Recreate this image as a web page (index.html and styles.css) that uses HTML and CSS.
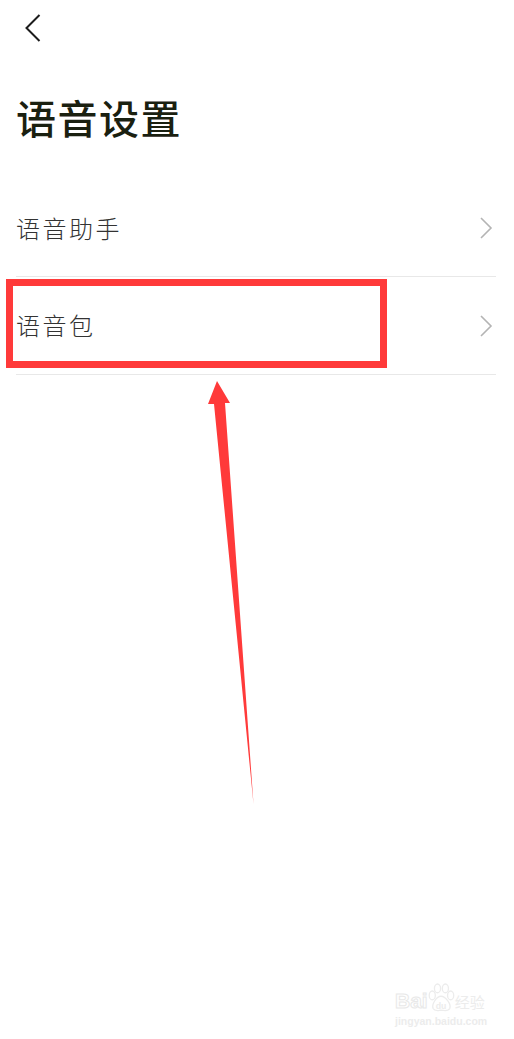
FILE: index.html
```html
<!DOCTYPE html>
<html lang="zh">
<head>
  <title>语音设置</title>
  <link rel="stylesheet" href="styles.css">
</head>
<body>
  <div class="back">
    <svg width="20" height="30" viewBox="0 0 20 30"><path d="M15.5 2 L2.5 15 L15.5 28" fill="none" stroke="#1c1c1c" stroke-width="2"/></svg>
  </div>

  <h1 class="title">语音设置</h1>

  <div class="list">
    <div class="row">
      <span class="row-text">语音助手</span>
      <svg class="chev" width="14" height="24" viewBox="0 0 14 24"><path d="M2 2 L12 12 L2 22" fill="none" stroke="#b4b4b4" stroke-width="1.6"/></svg>
    </div>
    <div class="row">
      <span class="row-text">语音包</span>
      <svg class="chev" width="14" height="24" viewBox="0 0 14 24"><path d="M2 2 L12 12 L2 22" fill="none" stroke="#b4b4b4" stroke-width="1.6"/></svg>
    </div>
  </div>

  <!-- annotation drawn over the screenshot -->
  <div class="mark-box"></div>
  <svg class="mark-arrow" width="70" height="430" viewBox="0 0 70 430">
    <path d="M27 1 L40 23 L35 23 L63.5 424 L24 24 L18 24 Z" fill="#ff3a3a"/>
  </svg>

  <div class="watermark">
    <div class="wm-top">
      <span class="wm-bai">Bai</span>
      <svg class="wm-paw" width="28" height="30" viewBox="0 0 32 34">
        <g fill="none" stroke="#ececec" stroke-width="1.5">
          <ellipse cx="6" cy="14" rx="3.5" ry="5"/>
          <ellipse cx="12" cy="6" rx="3.5" ry="5"/>
          <ellipse cx="21" cy="6" rx="3.5" ry="5"/>
          <ellipse cx="27" cy="14" rx="3.5" ry="5"/>
          <path d="M16 15 C11 15 5 24 7 29 C9 33 14 31 16 31 C19 31 24 33 26 29 C28 24 21 15 16 15 Z"/>
        </g>
        <text x="16" y="29" text-anchor="middle" class="wm-du">du</text>
      </svg>
      <span class="wm-jy">经验</span>
    </div>
    <div class="wm-url">jingyan.baidu.com</div>
  </div>
</body>
</html>
```

FILE: styles.css
```css
html, body {
  margin: 0;
  padding: 0;
}

body {
  width: 514px;
  height: 1039px;
  position: relative;
  overflow: hidden;
  background-color: #fff;
  font-family: "Noto Sans CJK SC", "Noto Sans", sans-serif;
}

.back {
  height: 30px;
  padding: 13px 0 0 24px;
}

.back svg {
  display: block;
}

.title {
  margin: 0;
  padding: 44px 0 0 16px;
  height: 60px;
  font-size: 40px;
  line-height: 60px;
  letter-spacing: 1.5px;
  font-weight: 500;
  color: #1a2010;
}

.list {
  margin: 33px 18px 0 16px;
}

.row {
  height: 95px;
  padding-bottom: 2px;
  display: flex;
  align-items: center;
  justify-content: space-between;
  border-bottom: 1px solid #e8e8e8;
}

.row:first-child {
  height: 94px;
}

.row-text {
  font-size: 24px;
  letter-spacing: 2.5px;
  color: #333;
  font-weight: 300;
}

.chev {
  margin: 2px 3px 0 0;
}

.mark-box {
  position: absolute;
  left: 6px;
  top: 279px;
  width: 367px;
  height: 75px;
  border: 7px solid #ff3a3a;
}

.mark-arrow {
  position: absolute;
  left: 190px;
  top: 380px;
}

.watermark {
  position: absolute;
  left: 395px;
  top: 983px;
  width: 100px;
  color: #ececec;
}

.wm-top {
  display: flex;
  align-items: flex-end;
  height: 30px;
}

.wm-bai {
  font-family: "Liberation Sans", sans-serif;
  font-size: 21px;
  line-height: 24px;
  font-weight: 700;
  color: #fff;
  -webkit-text-stroke: 1px #e8e8e8;
}

.wm-du {
  font-family: "Liberation Sans", sans-serif;
  font-size: 10px;
  font-weight: 700;
  fill: #ececec;
}

.wm-paw {
  margin-left: -1px;
  flex: none;
}

.wm-jy {
  font-size: 15px;
  line-height: 22px;
  white-space: nowrap;
}

.wm-url {
  font-family: "Liberation Sans", sans-serif;
  font-size: 10.5px;
  line-height: 12px;
  font-weight: 700;
  margin-top: 2px;
  white-space: nowrap;
}
```
